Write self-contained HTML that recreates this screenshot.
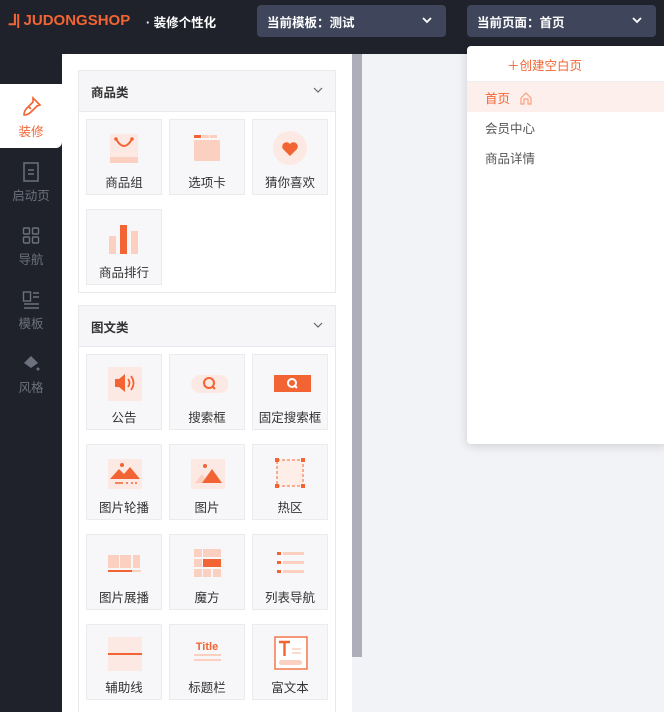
<!DOCTYPE html>
<html style="overflow:hidden;height:712px"><head><meta charset="utf-8"><style>
*{margin:0;padding:0;box-sizing:border-box}
body{width:664px;height:712px;overflow:hidden;background:#f2f3f7;font-family:"Liberation Sans","Noto Sans CJK SC",sans-serif;position:relative}
.top{position:absolute;left:0;top:0;width:664px;height:54px;background:#1f222b}
.side{position:absolute;left:0;top:54px;width:62px;height:658px;background:#1f222b}
.logo{position:absolute;left:8px;top:11px;color:#f26433;font-weight:bold;font-size:15px;letter-spacing:0;font-family:"Liberation Sans",sans-serif}
.sub{position:absolute;left:146px;top:12px;color:#fff;font-size:12.5px;font-weight:bold}
.sel{position:absolute;top:5px;height:32px;background:#3f465b;border-radius:4px;color:#fff;font-size:12.5px;font-weight:bold;padding:7px 0 0 10px}
.sel svg{position:absolute;right:14px;top:12px}
.nav{position:absolute;left:0;width:62px;text-align:center;font-size:12.5px;color:#6d717d}
.nav svg{display:block;margin:0 auto 3px}
.act{background:#fff;color:#f26433;top:84px;height:64px;padding-top:12px;border-radius:0 0 6px 0}
.panel{position:absolute;left:62px;top:54px;width:290px;height:658px;background:#fff;border-radius:6px 0 0 0}
.scroll{position:absolute;left:352px;top:54px;width:10px;height:603px;background:#aeaebb}
.sec{position:absolute;left:78px;width:258px;border:1px solid #eaeaee;background:#fff}
.hd{height:41px;background:#f6f6f8;border-bottom:1px solid #eaeaee;font-size:12.5px;font-weight:bold;color:#333;padding:11px 0 0 12px;position:relative}
.hd svg{position:absolute;right:12px;top:16px}
.card{position:absolute;width:76px;height:76px;background:#f7f7f9;border:1px solid #ebebee;text-align:center;font-size:12.5px;color:#333}
.card .ic{position:absolute;left:19px;top:10px;width:36px;height:36px}
.card span{position:absolute;left:0;right:0;top:52px}
.dd{position:absolute;left:467px;top:46px;width:200px;height:398px;background:#fff;box-shadow:0 2px 10px rgba(0,0,0,.15);border-radius:4px 0 0 4px}
.dd .it{height:30px;font-size:12.5px;color:#555;padding:6px 0 0 18px}
</style></head><body>
<div class="top"></div>
<div class="logo"><span style="letter-spacing:-1px">ᒧ|</span> JUDONGSHOP</div>
<div class="sub">· 装修个性化</div>
<div class="sel" style="left:257px;width:189px">当前模板：测试<svg width="10" height="7"><path d="M1 1l4 4 4-4" stroke="#fff" stroke-width="1.8" fill="none"/></svg></div>
<div class="sel" style="left:467px;width:189px">当前页面：首页<svg width="10" height="7"><path d="M1 1l4 4 4-4" stroke="#fff" stroke-width="1.8" fill="none"/></svg></div>
<div class="side"></div>
<div class="panel"></div>
<div class="nav act"><svg width="22" height="22" viewBox="0 0 22 22"><path d="M13 2l7 7-3 1-6 6c-2 2-5 3-7 3 0-2 1-5 3-7l6-6z M9 11l2 2" stroke="#f26433" stroke-width="1.6" fill="none"/></svg>装修</div>
<div class="nav" style="top:162px"><svg width="18" height="20"><rect x="2" y="1" width="14" height="18" stroke="#6d717d" stroke-width="1.5" fill="none"/><path d="M6 8h6M6 12h6" stroke="#6d717d" stroke-width="1.5"/></svg>启动页</div>
<div class="nav" style="top:226px"><svg width="18" height="20"><g stroke="#6d717d" stroke-width="1.4" fill="none"><rect x="1.5" y="2" width="6" height="6" rx="1"/><rect x="10.5" y="2" width="6" height="6" rx="1"/><rect x="1.5" y="11" width="6" height="6" rx="1"/><rect x="10.5" y="11" width="6" height="6" rx="1"/></g></svg>导航</div>
<div class="nav" style="top:290px"><svg width="18" height="20"><g stroke="#6d717d" stroke-width="1.4" fill="none"><rect x="1.5" y="2" width="7" height="9"/><path d="M11 3h6M11 7h6M2 14h15M2 18h15"/></g></svg>模板</div>
<div class="nav" style="top:354px"><svg width="18" height="20"><path d="M9 2l7 7-7 5-7-5z" fill="#6d717d"/><circle cx="16" cy="15" r="1.5" fill="#6d717d"/></svg>风格</div>
<div class="scroll"></div>

<div class="sec" style="top:70px;height:223px"><div class="hd">商品类<svg width="10" height="6"><path d="M1 1l4 4 4-4" stroke="#666" stroke-width="1.2" fill="none"/></svg></div></div>
<div class="card" style="left:86px;top:119px"><svg class="ic" viewBox="0 0 36 36"><rect x="4" y="4" width="28" height="28" fill="#fde9e3"/><rect x="4" y="27" width="28" height="6" fill="#fbd0c0"/><path d="M10 9q8 14 16 0" stroke="#f26433" stroke-width="2" fill="none"/><circle cx="10" cy="9" r="1.8" fill="#f26433"/><circle cx="26" cy="9" r="1.8" fill="#f26433"/></svg><span>商品组</span></div>
<div class="card" style="left:169px;top:119px"><svg class="ic" viewBox="0 0 36 36"><rect x="5" y="5" width="7" height="3" fill="#f26433"/><rect x="13" y="5" width="7" height="3" fill="#fbd0c0"/><rect x="21" y="5" width="7" height="3" fill="#fbd0c0"/><rect x="5" y="10" width="26" height="21" rx="1" fill="#fbd0c0"/></svg><span>选项卡</span></div>
<div class="card" style="left:252px;top:119px"><svg class="ic" viewBox="0 0 36 36"><circle cx="18" cy="18" r="17" fill="#fde9e3"/><path d="M18 26l-7-7a4 4 0 0 1 7-5 4 4 0 0 1 7 5z" fill="#f26433"/></svg><span>猜你喜欢</span></div>
<div class="card" style="left:86px;top:209px"><svg class="ic" viewBox="0 0 36 36"><rect x="3" y="16" width="7" height="18" fill="#fbd0c0"/><rect x="14" y="5" width="7" height="29" fill="#f26433"/><rect x="25" y="11" width="7" height="23" fill="#fbd0c0"/></svg><span>商品排行</span></div>

<div class="sec" style="top:305px;height:407px;border-bottom:none"><div class="hd">图文类<svg width="10" height="6"><path d="M1 1l4 4 4-4" stroke="#666" stroke-width="1.2" fill="none"/></svg></div></div>
<div class="card" style="left:86px;top:354px"><svg class="ic" viewBox="0 0 36 36"><rect x="2" y="2" width="34" height="34" fill="#fde9e3"/><path d="M9 14h4l6-5v18l-6-5H9z" fill="#f26433"/><path d="M22 14q3 4 0 8M25 11q5 7 0 14" stroke="#f26433" stroke-width="1.8" fill="none"/></svg><span>公告</span></div>
<div class="card" style="left:169px;top:354px"><svg class="ic" viewBox="0 0 36 36" style="left:18px;width:40px"><rect x="1" y="10" width="38" height="18" rx="9" fill="#fde9e3"/><circle cx="19" cy="18" r="5" stroke="#f26433" stroke-width="2" fill="none"/><path d="M22 21l3 3" stroke="#f26433" stroke-width="2"/></svg><span>搜索框</span></div>
<div class="card" style="left:252px;top:354px"><svg class="ic" viewBox="0 0 36 36" style="left:18px;width:40px"><rect x="1" y="10" width="38" height="17" fill="#f26433"/><circle cx="19" cy="18" r="4" stroke="#fff" stroke-width="2" fill="none"/><path d="M22 21l2 2" stroke="#fff" stroke-width="2"/></svg><span>固定搜索框</span></div>
<div class="card" style="left:86px;top:444px"><svg class="ic" viewBox="0 0 36 36"><rect x="2" y="4" width="34" height="30" fill="#fde9e3"/><path d="M4 24l9-10 5 5 6-7 10 12z" fill="#f26433"/><circle cx="16" cy="10" r="2" fill="#f26433"/><path d="M9 28h8M20 28h2M25 28h2M29 28h2" stroke="#f26433" stroke-width="1.5"/></svg><span>图片轮播</span></div>
<div class="card" style="left:169px;top:444px"><svg class="ic" viewBox="0 0 36 36"><rect x="2" y="4" width="34" height="30" fill="#fde9e3"/><path d="M6 28l7-9 6 9z" fill="#fbd0c0"/><path d="M13 28l10-14 10 14z" fill="#f26433"/><circle cx="16" cy="11" r="2" fill="#f26433"/></svg><span>图片</span></div>
<div class="card" style="left:252px;top:444px"><svg class="ic" viewBox="0 0 36 36"><rect x="5" y="5" width="26" height="26" fill="#fdeee8" stroke="#f26433" stroke-dasharray="3 2"/><rect x="3" y="3" width="4" height="4" fill="#f26433"/><rect x="29" y="3" width="4" height="4" fill="#f26433"/><rect x="3" y="29" width="4" height="4" fill="#f26433"/><rect x="29" y="29" width="4" height="4" fill="#f26433"/></svg><span>热区</span></div>
<div class="card" style="left:86px;top:534px"><svg class="ic" viewBox="0 0 36 36"><rect x="2" y="10" width="11" height="13" fill="#fbd0c0"/><rect x="14" y="10" width="11" height="13" fill="#fbd0c0"/><rect x="27" y="10" width="7" height="13" fill="#fbd0c0"/><rect x="2" y="25" width="24" height="2" fill="#f26433"/><rect x="26" y="25" width="9" height="2" fill="#fbd0c0"/></svg><span>图片展播</span></div>
<div class="card" style="left:169px;top:534px"><svg class="ic" viewBox="0 0 36 36"><g fill="#fbd0c0"><rect x="5" y="4" width="8" height="8"/><rect x="14" y="4" width="18" height="8"/><rect x="5" y="14" width="8" height="8"/><rect x="5" y="24" width="8" height="8"/><rect x="14" y="24" width="8" height="8"/><rect x="24" y="24" width="8" height="8"/></g><rect x="14" y="14" width="18" height="8" fill="#f26433"/></svg><span>魔方</span></div>
<div class="card" style="left:252px;top:534px"><svg class="ic" viewBox="0 0 36 36"><g fill="#f26433"><rect x="5" y="7" width="4" height="3"/><rect x="5" y="16" width="4" height="3"/><rect x="5" y="25" width="4" height="3"/></g><g fill="#fbd0c0"><rect x="11" y="7" width="21" height="3"/><rect x="11" y="16" width="21" height="3"/><rect x="11" y="25" width="21" height="3"/></g></svg><span>列表导航</span></div>
<div class="card" style="left:86px;top:624px"><svg class="ic" viewBox="0 0 36 36"><rect x="2" y="2" width="34" height="34" fill="#fde9e3"/><rect x="2" y="18" width="34" height="2" fill="#f26433"/></svg><span>辅助线</span></div>
<div class="card" style="left:169px;top:624px"><svg class="ic" viewBox="0 0 36 36"><text x="18" y="15" text-anchor="middle" font-family="Liberation Sans" font-weight="bold" font-size="11" fill="#f26433">Title</text><rect x="5" y="19" width="27" height="2" fill="#fbd0c0"/><rect x="5" y="24" width="27" height="2" fill="#fbd0c0"/></svg><span>标题栏</span></div>
<div class="card" style="left:252px;top:624px"><svg class="ic" viewBox="0 0 36 36"><rect x="3" y="2" width="32" height="32" fill="#fff" stroke="#f26433" stroke-width="1.3"/><path d="M7 7h11M12.5 7v14" stroke="#f26433" stroke-width="2.4"/><path d="M20 14h9M20 18h9" stroke="#fbd0c0" stroke-width="1.5"/><rect x="7" y="25" width="23" height="5" rx="2.5" fill="#fbd0c0"/></svg><span>富文本</span></div>

<div class="dd">
<div style="height:36px;border-bottom:1px solid #eee;color:#f26433;font-size:12.5px;padding:9px 0 0 40px">＋创建空白页</div>
<div class="it" style="background:#fdf0ec;color:#f26433">首页 <svg width="14" height="14" style="vertical-align:-2px;margin-left:6px"><path d="M2 7l5-5 5 5v6H9V8H5v5H2z" stroke="#f8a080" stroke-width="1.2" fill="none"/></svg></div>
<div class="it">会员中心</div>
<div class="it">商品详情</div>
</div>
</body></html>
